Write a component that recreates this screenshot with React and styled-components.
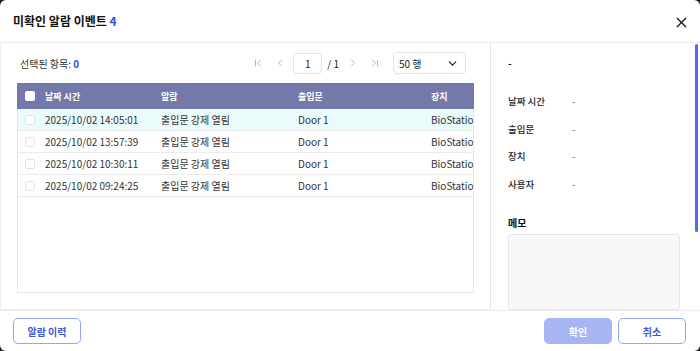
import React from 'react';
import styled, { createGlobalStyle } from 'styled-components';
import { ChevronFirst, ChevronLast, ChevronLeft, ChevronRight, ChevronDown, X } from 'lucide-react';

const GlobalStyle = createGlobalStyle`
  html, body { margin: 0; padding: 0; background: #1e1e1e; }
  body { font-family: "Noto Sans CJK KR", "Noto Sans", sans-serif; }
  * { box-sizing: border-box; }
`;

const rows = [
  { time: '2025/10/02 14:05:01', alarm: '출입문 강제 열림', door: 'Door 1', device: 'BioStation' },
  { time: '2025/10/02 13:57:39', alarm: '출입문 강제 열림', door: 'Door 1', device: 'BioStation' },
  { time: '2025/10/02 10:30:11', alarm: '출입문 강제 열림', door: 'Door 1', device: 'BioStation' },
  { time: '2025/10/02 09:24:25', alarm: '출입문 강제 열림', door: 'Door 1', device: 'BioStation' },
];

const details = ['날짜 시간', '출입문', '장치', '사용자'];

const App = () => {
  return (
    <>
      <GlobalStyle />
      <Modal>
        <Header>
          <Title>미확인 알람 이벤트 <Count>4</Count></Title>
          <CloseButton><X size={17} strokeWidth={1.8} /></CloseButton>
        </Header>
        <Body>
          <LeftPane>
            <Toolbar>
              <Selected>선택된 항목: <Count>0</Count></Selected>
              <Pager>
                <PageIcon><ChevronFirst size={12} /></PageIcon>
                <PageIcon><ChevronLeft size={12} /></PageIcon>
                <PageInput>1</PageInput>
                <PageTotal>/ 1</PageTotal>
                <PageIcon><ChevronRight size={12} /></PageIcon>
                <PageIcon><ChevronLast size={12} /></PageIcon>
                <RowSelect>50 행<ChevronDown size={13} strokeWidth={2.2} /></RowSelect>
              </Pager>
            </Toolbar>
            <TableBox>
              <HeadRow>
                <Cell><Check $head /></Cell>
                <Cell>날짜 시간</Cell>
                <Cell>알람</Cell>
                <Cell>출입문</Cell>
                <Cell>장치</Cell>
              </HeadRow>
              {rows.map((r, i) => (
                <Row key={i} $active={i === 0}>
                  <Cell><Check /></Cell>
                  <Cell>{r.time}</Cell>
                  <Cell>{r.alarm}</Cell>
                  <Cell>{r.door}</Cell>
                  <Cell>{r.device}</Cell>
                </Row>
              ))}
            </TableBox>
          </LeftPane>
          <RightPane>
            <DetailTitle>-</DetailTitle>
            <DetailList>
              {details.map((d) => (
                <DetailRow key={d}>
                  <DetailLabel>{d}</DetailLabel>
                  <DetailValue>-</DetailValue>
                </DetailRow>
              ))}
            </DetailList>
            <MemoLabel>메모</MemoLabel>
            <Memo />
            <ScrollThumb />
          </RightPane>
        </Body>
        <Footer>
          <Button>알람 이력</Button>
          <FooterRight>
            <Button $primary disabled>확인</Button>
            <Button>취소</Button>
          </FooterRight>
        </Footer>
      </Modal>
    </>
  );
};

const Modal = styled.div`
  width: 700px;
  height: 351px;
  background: #fff;
  border-radius: 6px;
  display: flex;
  flex-direction: column;
  overflow: hidden;
`;

const Header = styled.div`
  height: 43px;
  padding: 0 10px 0 13px;
  display: flex;
  align-items: center;
  justify-content: space-between;
  border-bottom: 1px solid #ececec;
`;

const Title = styled.div`
  font-size: 12px;
  font-weight: 700;
  color: #111;
  padding-bottom: 1px;
`;

const Count = styled.span`
  color: #2f4fe0;
  font-weight: 700;
`;

const CloseButton = styled.div`
  display: flex;
  color: #111;
  padding-top: 3px;
`;

const Body = styled.div`
  flex: 1;
  display: flex;
  min-height: 0;
`;

const LeftPane = styled.div`
  width: 491px;
  border-right: 1px solid #e8e8e8;
  border-left: 1px solid #f0f0f0;
  border-bottom: 1px solid #f0f0f0;
  padding: 0 16px 16px 16px;
  display: flex;
  flex-direction: column;
`;

const Toolbar = styled.div`
  height: 40px;
  display: flex;
  align-items: center;
  justify-content: space-between;
  padding-left: 3px;
`;

const Selected = styled.div`
  font-size: 10px;
  color: #333;
`;

const Pager = styled.div`
  display: flex;
  align-items: center;
  margin-right: 8px;
`;

const PageIcon = styled.span`
  display: flex;
  color: #b8b8b8;
  margin: 0 5px;
`;

const PageInput = styled.div`
  width: 29px;
  height: 21px;
  border: 1px solid #e3e3e3;
  border-radius: 4px;
  font-size: 10px;
  color: #222;
  display: flex;
  align-items: center;
  justify-content: center;
  margin: 0 5px 0 2px;
`;

const PageTotal = styled.span`
  font-size: 10px;
  color: #222;
  margin-right: 3px;
`;

const RowSelect = styled.div`
  width: 73px;
  height: 22px;
  border: 1px solid #e3e3e3;
  border-radius: 4px;
  font-size: 10px;
  color: #222;
  display: flex;
  align-items: center;
  justify-content: space-between;
  padding: 0 6px 0 5px;
  margin-left: 7px;
`;

const TableBox = styled.div`
  height: 210px;
  border: 1px solid #e6e6e6;
  border-top: none;
`;

const grid = `
  display: grid;
  grid-template-columns: 27px 116px 137px 133px 1fr;
  align-items: center;
`;

const HeadRow = styled.div`
  ${grid}
  height: 26px;
  background: #7479a9;
  color: #fff;
  font-size: 9px;
  font-weight: 700;
  margin: 0 -1px;
  padding-left: 1px;
`;

const Row = styled.div`
  ${grid}
  height: 22px;
  background: ${(p) => (p.$active ? '#eafbfb' : '#fff')};
  border-bottom: 1px solid #ececec;
  font-size: 10px;
  color: #333;
`;

const Cell = styled.div`
  white-space: nowrap;
  overflow: hidden;
  display: flex;
  align-items: center;
  &:first-child { padding-left: 7px; }
`;

const Check = styled.span`
  width: 10px;
  height: 10px;
  border-radius: 2px;
  background: #fff;
  border: ${(p) => (p.$head ? 'none' : '1px solid #e2e2e2')};
`;

const RightPane = styled.div`
  flex: 1;
  position: relative;
  padding: 12px 17px 0 17px;
  display: flex;
  flex-direction: column;
`;

const DetailTitle = styled.div`
  font-size: 10px;
  font-weight: 700;
  color: #222;
  height: 14px;
`;

const DetailList = styled.div`
  display: flex;
  flex-direction: column;
  gap: 13px;
  margin-top: 25px;
`;

const DetailRow = styled.div`
  display: flex;
  align-items: center;
  height: 14.5px;
  font-size: 9.5px;
`;

const DetailLabel = styled.span`
  width: 64px;
  color: #222;
  font-weight: 500;
`;

const DetailValue = styled.span`
  color: #666;
`;

const MemoLabel = styled.div`
  margin-top: 24px;
  font-size: 10px;
  font-weight: 700;
  color: #111;
`;

const Memo = styled.div`
  margin-top: 4px;
  width: 172px;
  height: 90px;
  background: #f8f8f8;
  border: 1px solid #e6e6e6;
  border-radius: 3px;
`;

const ScrollThumb = styled.div`
  position: absolute;
  right: 2px;
  top: 1px;
  width: 3px;
  height: 188px;
  border-radius: 2px;
  background: #4c6cf5;
`;

const Footer = styled.div`
  height: 41px;
  border-top: 1px solid #ececec;
  display: flex;
  align-items: center;
  justify-content: space-between;
  padding: 0 14px 0 13px;
`;

const FooterRight = styled.div`
  display: flex;
  gap: 6px;
`;

const Button = styled.button`
  width: 68px;
  height: 26px;
  border-radius: 5px;
  font-family: inherit;
  font-size: 10px;
  font-weight: 700;
  border: 1px solid ${(p) => (p.$primary ? '#a7b6f2' : '#93a6f3')};
  background: ${(p) => (p.$primary ? '#a7b6f2' : '#fff')};
  color: ${(p) => (p.$primary ? '#fff' : '#3d57d8')};
  padding: 0;
`;

export default App;
